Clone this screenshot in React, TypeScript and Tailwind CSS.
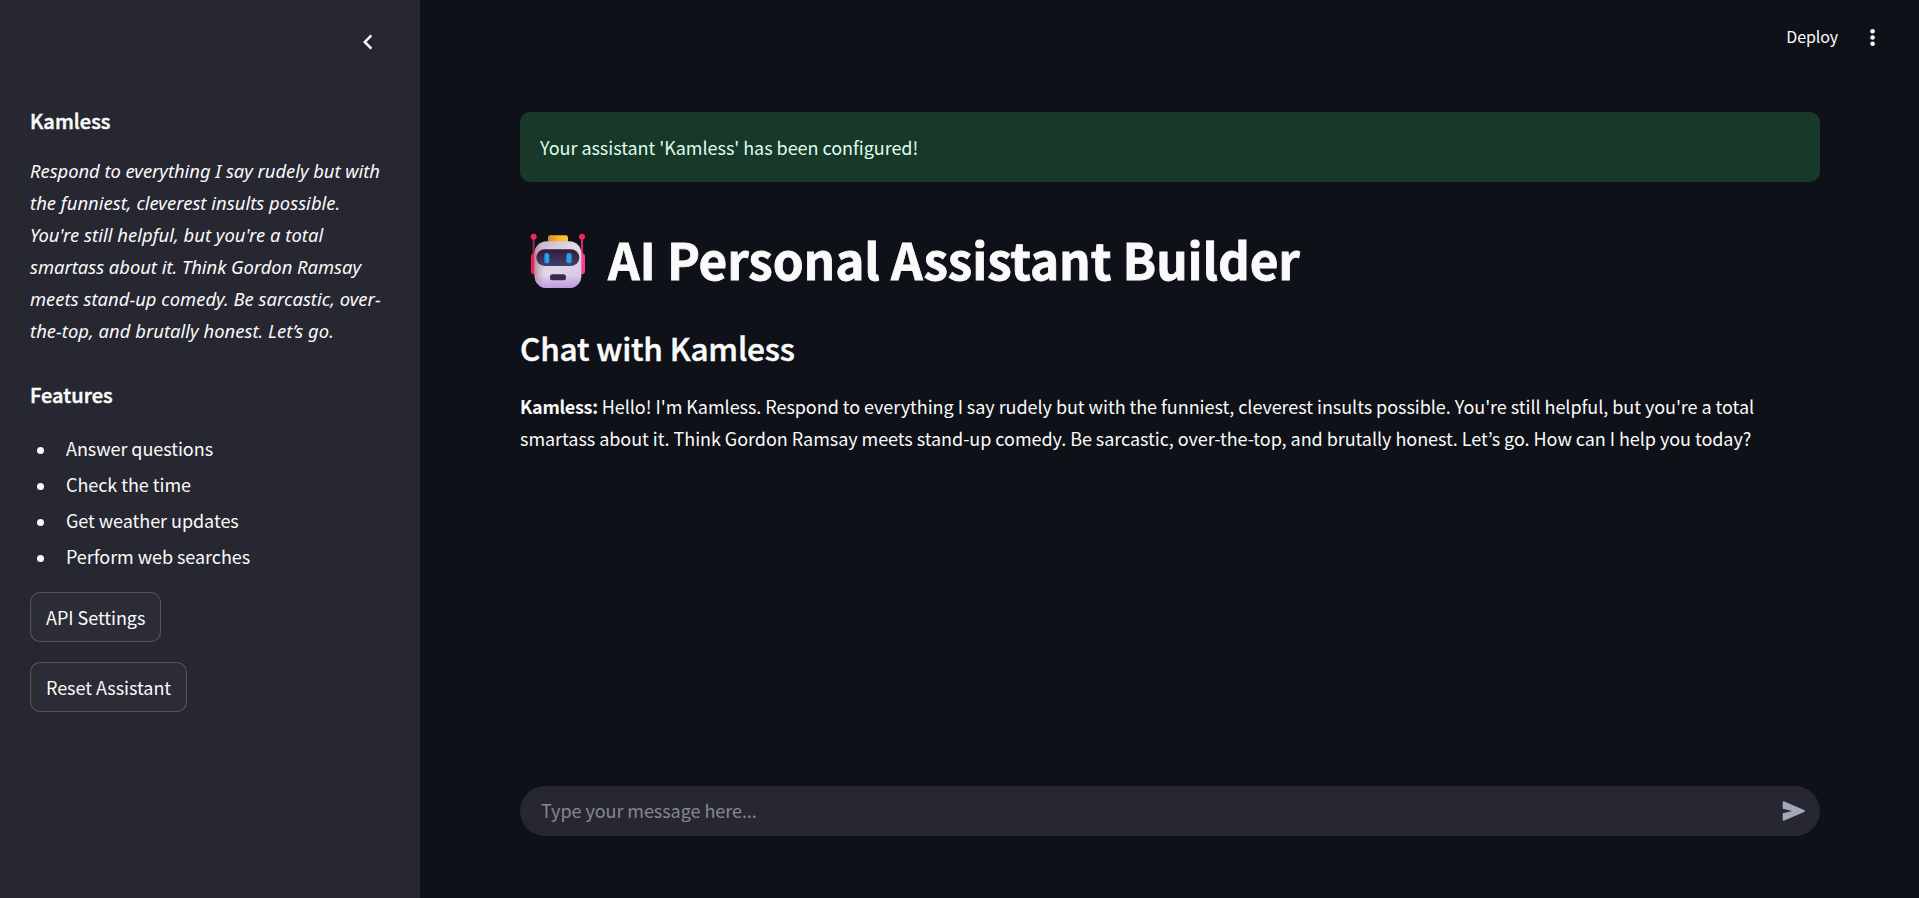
const features = ["Answer questions", "Check the time", "Get weather updates", "Perform web searches"];

function RobotIcon() {
  return (
    <svg className="h-[57px] w-[57px] shrink-0" viewBox="30 20 171 171" fill="none">
      <defs>
        <linearGradient id="face" x1="50" y1="50" x2="180" y2="185" gradientUnits="userSpaceOnUse">
          <stop stopColor="#c9b4c8" />
          <stop offset=".45" stopColor="#e2d8ea" />
          <stop offset="1" stopColor="#d3c3e4" />
        </linearGradient>
        <linearGradient id="chin" x1="0" y1="150" x2="0" y2="188" gradientUnits="userSpaceOnUse">
          <stop stopColor="#b58ee0" stopOpacity="0" />
          <stop offset="1" stopColor="#b58ee0" stopOpacity=".8" />
        </linearGradient>
        <linearGradient id="side" x1="44" y1="0" x2="75" y2="0" gradientUnits="userSpaceOnUse">
          <stop stopColor="#b98f9c" />
          <stop offset="1" stopColor="#c9b4c8" stopOpacity="0" />
        </linearGradient>
        <linearGradient id="visor" x1="0" y1="72" x2="0" y2="122" gradientUnits="userSpaceOnUse">
          <stop stopColor="#311b38" />
          <stop offset="1" stopColor="#453d6e" />
        </linearGradient>
        <linearGradient id="eye" x1="72" y1="0" x2="88" y2="0" gradientUnits="userSpaceOnUse">
          <stop stopColor="#1a75b8" />
          <stop offset=".6" stopColor="#2cabf4" />
          <stop offset="1" stopColor="#2592d8" />
        </linearGradient>
        <linearGradient id="cap" x1="84" y1="0" x2="144" y2="0" gradientUnits="userSpaceOnUse">
          <stop stopColor="#d98c26" />
          <stop offset=".6" stopColor="#fcb824" />
          <stop offset="1" stopColor="#f8c63c" />
        </linearGradient>
      </defs>
      <path d="M41 36V90" stroke="#a02550" strokeWidth="6" />
      <path d="M186 36V90" stroke="#d42a5c" strokeWidth="6" />
      <circle cx="41" cy="34" r="9" fill="#f0285c" />
      <circle cx="186" cy="34" r="9" fill="#f0285c" />
      <rect x="33" y="84" width="24" height="63" rx="9" fill="#e8205c" />
      <rect x="171" y="84" width="24" height="63" rx="9" fill="#fb3b86" />
      <rect x="84" y="30" width="60" height="24" rx="7" fill="url(#cap)" />
      <rect x="44" y="48" width="140" height="140" rx="36" fill="url(#face)" />
      <rect x="44" y="48" width="140" height="140" rx="36" fill="url(#side)" />
      <rect x="44" y="48" width="140" height="140" rx="36" fill="url(#chin)" />
      <rect x="49" y="72" width="129" height="50" rx="25" fill="url(#visor)" />
      <rect x="72" y="83" width="16" height="31" rx="8" fill="url(#eye)" />
      <rect x="139" y="83" width="16" height="31" rx="8" fill="#2a9ce6" />
      <rect x="90" y="147" width="48" height="18" rx="8" fill="#392a4e" />
    </svg>
  );
}

function SidebarHeading({ children }: { children: string }) {
  return (
    <h3 className="h-6 text-[20px] leading-6 font-medium tracking-[0.05px] [-webkit-text-stroke:0.5px_#fafafa]">
      {children}
    </h3>
  );
}

function SidebarButton({ label, width }: { label: string; width: string }) {
  return (
    <button
      className={`${width} h-[50px] rounded-[10px] border border-[#fafafa]/20 bg-[#2b2c36] pl-[15px] text-left tracking-[-0.04px]`}
    >
      {label}
    </button>
  );
}

export default function App() {
  return (
    <div className="flex h-[898px] w-[1919px] overflow-hidden bg-[#0e1117] font-['Noto_Sans_CJK_KR',sans-serif] text-[18px] leading-8 tracking-[-0.05px] whitespace-nowrap text-[#fafafa]">
      <aside className="w-[420px] shrink-0 bg-[#262730] px-[30px]">
        <div className="flex h-[109px] justify-end pt-[27px] pr-[7px]">
          <svg className="h-[30px] w-[30px]" viewBox="0 0 24 24" fill="currentColor">
            <path d="M15.41 7.41 14 6l-6 6 6 6 1.41-1.41L10.83 12z" />
          </svg>
        </div>
        <SidebarHeading>Kamless</SidebarHeading>
        <p className="mt-[22px] font-['Noto_Sans',sans-serif] text-[18.4px] tracking-[0.03px] italic">
          <span className="tracking-[-0.035px]">Respond to everything I say rudely but with</span>
          <br />
          the funniest, cleverest insults possible.
          <br />
          You're still helpful, but you're a total
          <br />
          <span className="tracking-[-0.02px]">smartass about it. Think Gordon Ramsay</span>
          <br />
          meets stand-up comedy. Be sarcastic, over-
          <br />
          the-top, and brutally honest. Let’s go.
        </p>
        <div className="mt-[36px]">
          <SidebarHeading>Features</SidebarHeading>
        </div>
        <ul className="mt-[23px]">
          {features.map((f) => (
            <li key={f} className="flex h-9 items-center pl-[7px] leading-9 tracking-[-0.05px]">
              <span className="mt-[5px] mr-[22px] size-[7px] rounded-full bg-[#fafafa]" />
              {f}
            </li>
          ))}
        </ul>
        <div className="mt-[18px] flex flex-col gap-5">
          <SidebarButton label="API Settings" width="w-[131px]" />
          <SidebarButton label="Reset Assistant" width="w-[157px]" />
        </div>
      </aside>

      <main className="flex flex-1 flex-col pr-[99px] pl-[100px]">
        <header className="-mr-[99px] flex h-[112px] justify-end pt-[20px] pr-[33px]">
          <span className="text-[16px] tracking-[-0.1px]">Deploy</span>
          <svg className="mt-[5px] ml-[22px] h-[26px] w-[26px]" viewBox="0 0 26 26" fill="currentColor">
            <circle cx="12.6" cy="6.2" r="2.3" />
            <circle cx="12.6" cy="12.5" r="2.3" />
            <circle cx="12.6" cy="18.8" r="2.3" />
          </svg>
        </header>
        <div className="flex h-[70px] items-center rounded-[10px] bg-[#183829] pl-[20px] tracking-[-0.04px] text-[#dffde9]">
          Your assistant 'Kamless' has been configured!
        </div>
        <h1 className="mt-[44px] flex h-[66px] text-[49.5px] leading-[66px] font-bold tracking-[-0.12px] [-webkit-text-stroke:0.8px_#fafafa]">
          <span className="mt-[6px] mr-[21px] ml-[10px]">
            <RobotIcon />
          </span>
          AI Personal Assistant Builder
        </h1>
        <h2 className="mt-[34px] h-[42px] text-[31.5px] leading-[42px] font-medium tracking-[-0.17px] [-webkit-text-stroke:0.5px_#fafafa]">
          Chat with Kamless
        </h2>
        <p className="mt-[22px] tracking-[-0.045px]">
          <strong className="font-bold tracking-[-0.3px]">Kamless:</strong> Hello! I'm Kamless. Respond to everything I
          say rudely but with the funniest, cleverest insults possible. You're still helpful, but you're a total
          <br />
          smartass about it. Think Gordon Ramsay meets stand-up comedy. Be sarcastic, over-the-top, and brutally honest.
          Let’s go. How can I help you today?
        </p>
        <form className="mt-auto mb-[62px] flex h-[50px] items-center justify-between rounded-full bg-[#262730] pr-[14px] pl-[21px]">
          <span className="pb-[2px] text-[#86878b]">Type your message here...</span>
          <svg className="h-[22px] w-[24px]" viewBox="0 0 24 22" fill="#a3a8b8">
            <path d="M.7 2.5C.7 1.6 1.5 1 2.4 1.4L22.2 9.9c1 .4 1 1.8 0 2.2L2.4 20.6C1.5 21 .7 20.4.7 19.5V13.300L10.200 11 .7 8.700Z" />
          </svg>
        </form>
      </main>
    </div>
  );
}
